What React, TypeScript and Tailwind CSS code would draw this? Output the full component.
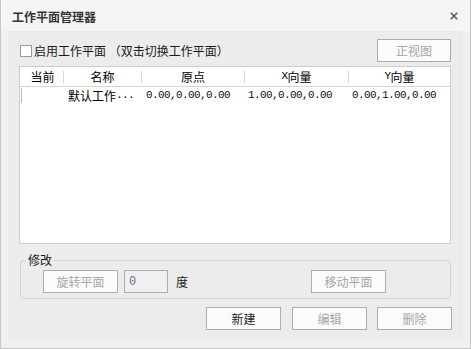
import React from "react";

const cjk = { fontFamily: '"Noto Sans CJK SC", "Noto Sans", sans-serif' };
const mono = { fontFamily: '"Liberation Mono", "Noto Sans CJK SC", monospace' };

function Btn({ label, w = "w-[75px]", enabled = false }: { label: string; w?: string; enabled?: boolean }) {
  return (
    <button
      className={`${w} h-[23px] shrink-0 border border-[#adadad] bg-[#fbfbfb] text-[12px] leading-none flex items-center justify-center ${
        enabled ? "text-[#1a1a1a]" : "text-[#a6a6a6]"
      }`}
      style={cjk}
    >
      {label}
    </button>
  );
}

function Num({ v }: { v: string }) {
  return (
    <span className="text-[11px] tracking-[-0.6px] text-[#111]" style={mono}>
      {v}
    </span>
  );
}

export default function App() {
  const cols = "grid-cols-[43px_78px_103px_104px_102px]";
  return (
    <div
      className="w-[471px] h-[349px] bg-[#f0f0f0] border-x border-b border-[#c6c6c6] flex flex-col overflow-hidden"
      style={cjk}
    >
      {/* title bar */}
      <div className="h-[31px] shrink-0 bg-[#f5f5f5] flex items-center justify-between pl-[11px] pr-[11px]">
        <span className="text-[12px] font-bold text-[#333] pt-[2px]">工作平面管理器</span>
        <svg width="8" height="8" viewBox="0 0 8 8" className="mr-[1px]">
          <path d="M0.8 0.8 L7.2 7.2 M7.2 0.8 L0.8 7.2" stroke="#5a5a5a" strokeWidth="1.6" />
        </svg>
      </div>

      {/* content */}
      <div className="mx-[7px] h-[309px] shrink-0 bg-[#ececec] flex flex-col pl-[11px] pr-[12px] pt-[8px]">
        {/* checkbox row */}
        <div className="h-[23px] flex items-center justify-between">
          <div className="flex items-center">
            <span className="w-[12px] h-[12px] ml-[1px] border border-[#9a9a9a] bg-white"></span>
            <span className="ml-[2px] text-[12px] text-[#1a1a1a] leading-none">启用工作平面 （双击切换工作平面）</span>
          </div>
          <Btn label="正视图" w="w-[74px]" />
        </div>

        {/* list */}
        <div className="mt-[4px] h-[178px] border border-[#cdcdcd] bg-white flex flex-col">
          <div className={`grid ${cols} h-[20px] border-b border-[#d6d6d6] text-[12px] text-black`}>
            <div className="flex items-center justify-center pl-[2px]">当前</div>
            {[
              ["名称", ""],
              ["原点", ""],
              ["向量", "X"],
              ["向量", "Y"],
            ].map(([t, p], i) => (
              <div key={i} className="flex items-center">
                <div className="w-px h-[12px] bg-[#d9d9d9]"></div>
                <div className="flex-1 flex items-center justify-center leading-none">
                  {p && (
                    <span className="text-[11px] tracking-[-0.6px]" style={mono}>
                      {p}
                    </span>
                  )}
                  {t}
                </div>
              </div>
            ))}
          </div>
          <div className={`grid ${cols} h-[17px] text-[12px] text-black`}>
            <div className="flex items-center">
              <div className="ml-[1px] w-px h-[15px] bg-[#bdbdbd]"></div>
            </div>
            <div className="flex items-center pl-[5px] leading-none">
              默认工作
              <span className="text-[11px] tracking-[-0.6px]" style={mono}>...</span>
            </div>
            <div className="flex items-center pl-[5px] leading-none">
              <Num v="0.00,0.00,0.00" />
            </div>
            <div className="flex items-center pl-[4px] leading-none">
              <Num v="1.00,0.00,0.00" />
            </div>
            <div className="flex items-center pl-[4px] leading-none">
              <Num v="0.00,1.00,0.00" />
            </div>
          </div>
        </div>

        {/* group box */}
        <fieldset className="mt-[8px] ml-[1px] border border-[#d3d3d3] rounded-[4px] pl-[22px] pr-[4px] pt-[2px] pb-[5px]">
          <legend className="-ml-[17px] px-[2px] text-[12px] leading-[16px] text-[#1a1a1a]">修改</legend>
          <div className="flex items-center">
            <Btn label="旋转平面" />
            <div className="ml-[6px] w-[44px] h-[23px] border border-[#adadad] bg-[#f0f0f0] flex items-center pl-[4px] text-[12px] text-[#6f6f86]" style={mono}>
              0
            </div>
            <span className="ml-[8px] text-[12px] text-[#1a1a1a]">度</span>
            <div className="ml-[123px]">
              <Btn label="移动平面" />
            </div>
          </div>
        </fieldset>

        {/* bottom buttons */}
        <div className="mt-[8px] flex justify-end -mr-[1px]">
          <Btn label="新建" enabled />
          <div className="ml-[11px]">
            <Btn label="编辑" />
          </div>
          <div className="ml-[10px]">
            <Btn label="删除" />
          </div>
        </div>
      </div>
    </div>
  );
}
